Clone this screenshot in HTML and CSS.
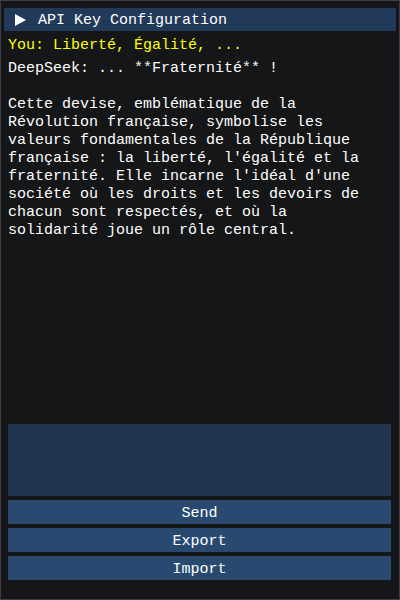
FILE: index.html
```html
<!DOCTYPE html>
<html>
<head>
<meta charset="utf-8">
<link rel="stylesheet" href="styles.css">
</head>
<body>
<div class="window">
  <div class="header">
    <svg class="arrow" width="11" height="12" viewBox="0 0 11 12"><polygon points="0,0 11,6 0,12" fill="#ffffff"/></svg>
    <span>API Key Configuration</span>
  </div>
  <div class="you">You: Liberté, Égalité, ...</div>
  <div class="reply">DeepSeek: ... **Fraternité** !

Cette devise, emblématique de la
Révolution française, symbolise les
valeurs fondamentales de la République
française : la liberté, l'égalité et la
fraternité. Elle incarne l'idéal d'une
société où les droits et les devoirs de
chacun sont respectés, et où la
solidarité joue un rôle central.</div>
  <div class="spacer"></div>
  <div class="input"></div>
  <div class="btn">Send</div>
  <div class="btn">Export</div>
  <div class="btn">Import</div>
</div>
</body>
</html>
```
FILE: styles.css
```css
* { box-sizing: border-box; }
html, body { margin: 0; padding: 0; background: #151618; }
body { font-family: "Liberation Mono", "DejaVu Sans Mono", monospace; font-size: 15px; color: #ffffff; }
.window {
  width: 400px;
  height: 600px;
  border: 1px solid #3c3c44;
  background: #151618;
  padding: 7px 8px 19px 7px;
  display: flex;
  flex-direction: column;
}
.header {
  height: 23px;
  margin: 0 -5px 0 -4px;
  background: #223a59;
  display: flex;
  align-items: center;
  line-height: 21px;
  padding-left: 11px;
}
.arrow { margin-right: 12px; margin-top: 1px; flex: none; }
.header span { padding-top: 2px; }
.you { color: #ffff00; line-height: 18px; margin-top: 6px; white-space: pre; }
.reply { line-height: 18px; margin-top: 5px; white-space: pre; }
.spacer { flex: 1; }
.input { height: 72px; background: #213450; }
.btn {
  height: 24px;
  margin-top: 4px;
  background: #284a71;
  text-align: center;
  line-height: 22px;
  padding-top: 3px;
}
```
